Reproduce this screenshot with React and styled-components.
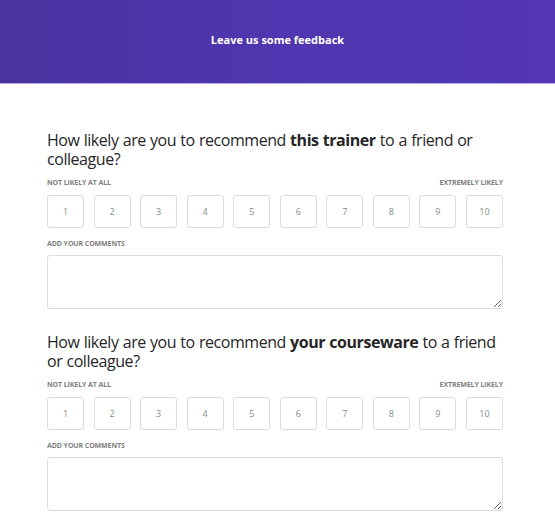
import React from "react";
import styled, { createGlobalStyle } from "styled-components";

const Global = createGlobalStyle`
  html, body { margin: 0; padding: 0; background: #fff; }
  body { font-family: "Open Sans", "Noto Sans", sans-serif; color: #2b2b2b; }
`;

const Header = styled.header`
  height: 83px;
  display: flex;
  align-items: center;
  justify-content: center;
  background: linear-gradient(90deg, #4a33a0 0%, #5036b0 50%, #5337b6 100%);
  border-bottom: 1px solid #b9acea;
`;

const HeaderTitle = styled.h1`
  margin: 0 0 4px 0;
  font-size: 11px;
  font-weight: 700;
  color: #fff;
  letter-spacing: 0;
`;

const Main = styled.main`
  width: 456px;
  padding: 47px 0 0 47px;
  display: flex;
  flex-direction: column;
  gap: 24px;
`;

const Section = styled.section`
  display: flex;
  flex-direction: column;
`;

const Question = styled.h2`
  margin: 0;
  font-size: 16px;
  line-height: 19px;
  font-weight: 400;
  color: #262626;
  letter-spacing: -0.45px;
  word-spacing: 0.5px;
  b { font-weight: 700; }
`;

const ScaleLabels = styled.div`
  display: flex;
  justify-content: space-between;
  margin-top: 9px;
`;

const SmallLabel = styled.span`
  font-size: 7px;
  line-height: 10px;
  font-weight: 700;
  color: #808080;
  text-transform: uppercase;
  letter-spacing: -0.1px;
`;

const Scale = styled.div`
  display: grid;
  grid-template-columns: repeat(10, 1fr);
  column-gap: 9.5px;
  margin-top: 7px;
`;

const ScoreBox = styled.button`
  height: 33px;
  padding: 0;
  border: 1px solid #dcdcdc;
  border-radius: 3px;
  background: #fff;
  font-family: inherit;
  font-size: 9px;
  color: #8a8a8a;
  display: flex;
  align-items: center;
  justify-content: center;
`;

const CommentLabel = styled(SmallLabel)`
  display: block;
  margin-top: 11px;
`;

const Comment = styled.textarea`
  display: block;
  box-sizing: border-box;
  width: 100%;
  height: 54px;
  margin-top: 6px;
  border: 1px solid #dcdcdc;
  border-radius: 3px;
  font-family: inherit;
  resize: vertical;
  outline: none;
`;

const questions = [
  { pre: "How likely are you to recommend ", bold: "this trainer", post: " to a friend or colleague?" },
  { pre: "How likely are you to recommend ", bold: "your courseware", post: " to a friend or colleague?" },
];

export default function App() {
  return (
    <>
      <Global />
      <Header>
        <HeaderTitle>Leave us some feedback</HeaderTitle>
      </Header>
      <Main>
        {questions.map((q, i) => (
          <Section key={i}>
            <Question>
              {q.pre}
              <b>{q.bold}</b>
              {q.post}
            </Question>
            <ScaleLabels>
              <SmallLabel>Not likely at all</SmallLabel>
              <SmallLabel>Extremely likely</SmallLabel>
            </ScaleLabels>
            <Scale>
              {Array.from({ length: 10 }, (_, n) => (
                <ScoreBox key={n}>{n + 1}</ScoreBox>
              ))}
            </Scale>
            <CommentLabel>Add your comments</CommentLabel>
            <Comment />
          </Section>
        ))}
      </Main>
    </>
  );
}
